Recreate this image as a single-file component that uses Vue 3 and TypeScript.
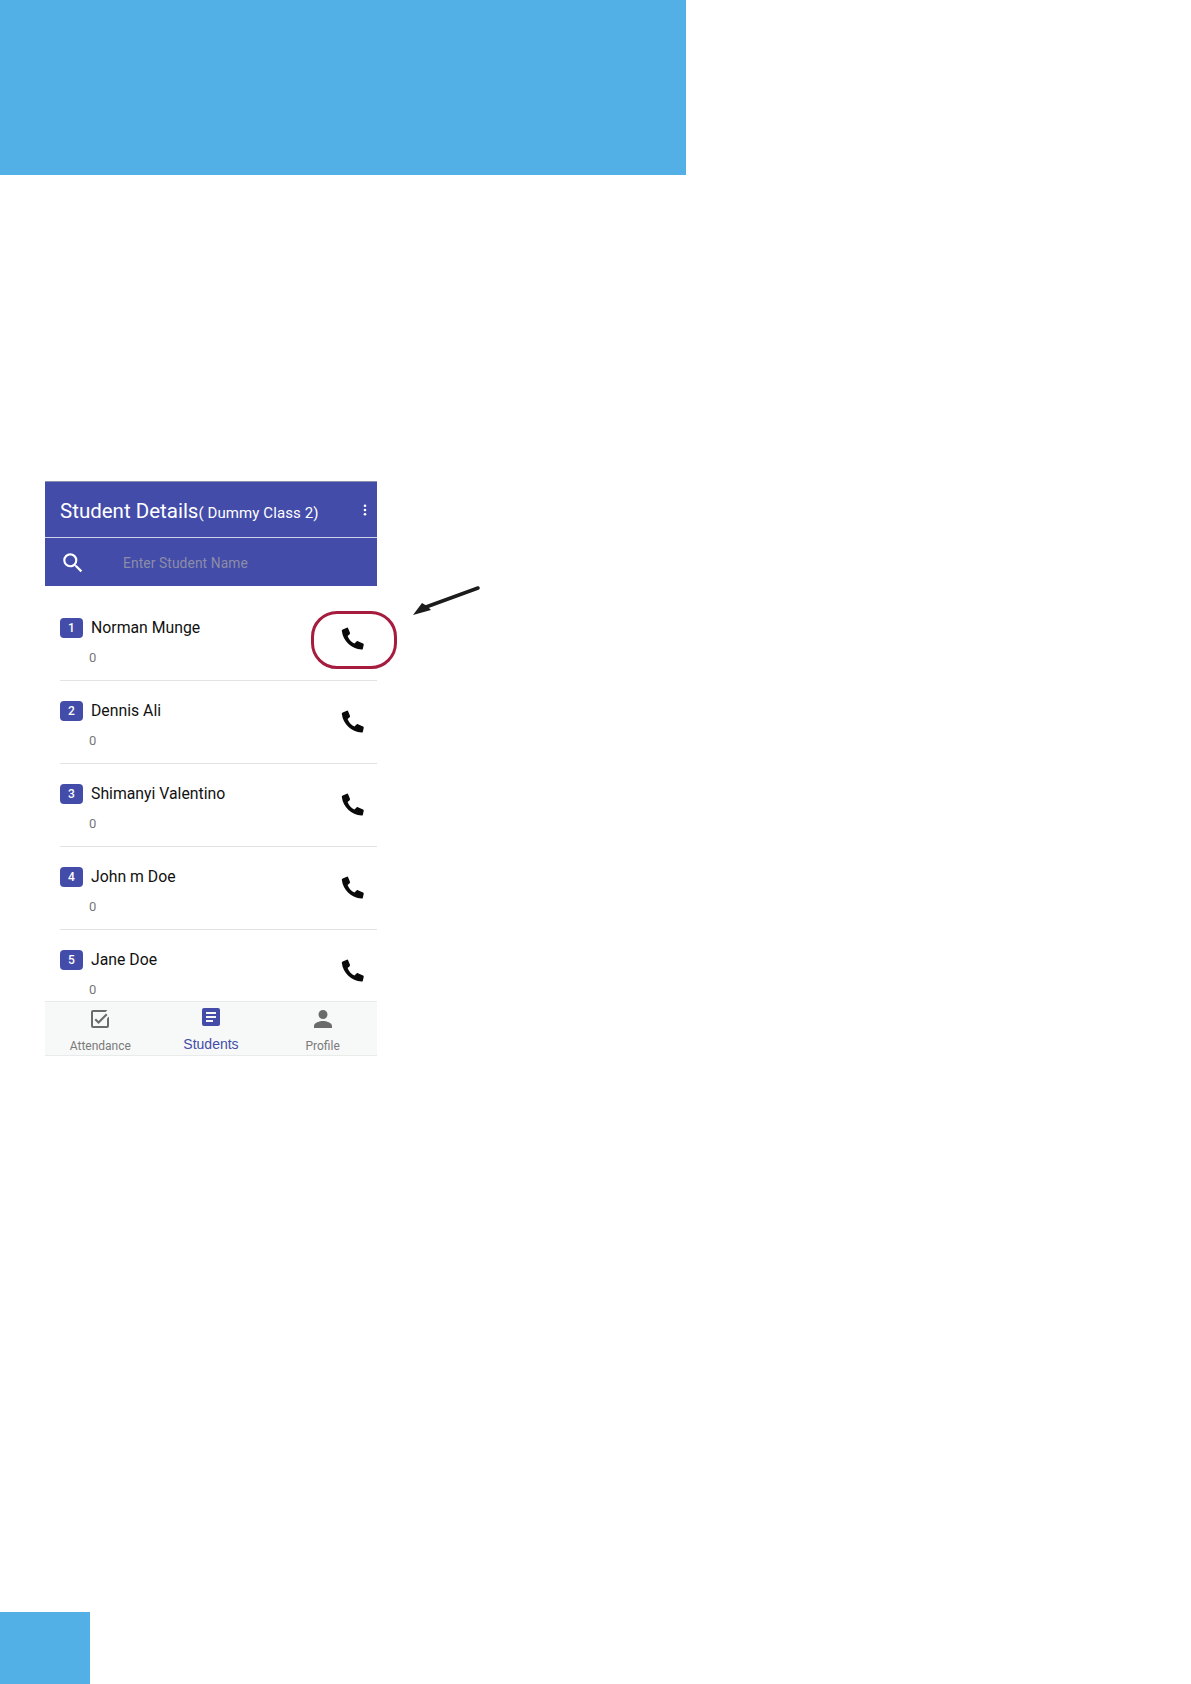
<script setup lang="ts">
interface Student { id: number; name: string }
const students: Student[] = [
  { id: 1, name: 'Norman Munge' },
  { id: 2, name: 'Dennis Ali' },
  { id: 3, name: 'Shimanyi Valentino' },
  { id: 4, name: 'John m Doe' },
  { id: 5, name: 'Jane Doe' },
]
const phonePath = 'M2.600 2.400 6.300.600c.5-.2 1 0 1.200.5l1.700 4.300c.2.400 0 .9-.3 1.200L7 8.300c1 2.900 3.400 5.600 6.300 7l2-2c.3-.3.8-.4 1.200-.2l4.800 2.100c.5.200.7.700.6 1.100l-.8 3.700c-.2.600-.6.900-1.200.8C10.400 20.200 2.800 12.800 1.700 3.600c-.1-.5.300-1 .9-1.200z'
</script>

<template>
  <div class="page">
    <div class="band"></div>
    <main class="phone">
      <header class="title-bar">
        <h1 class="title">Student Details<span class="subtitle">( Dummy Class 2)</span></h1>
        <svg class="more" width="4" height="12" viewBox="0 0 4 12" aria-hidden="true">
          <circle cx="2" cy="1.800" r="1.300" />
          <circle cx="2" cy="6" r="1.300" />
          <circle cx="2" cy="10.200" r="1.300" />
        </svg>
      </header>
      <div class="search-bar">
        <svg class="search-icon" width="26" height="26" viewBox="0 0 24 24" aria-hidden="true">
          <path d="M15.500 14h-.790l-.280-.270A6.470 6.470 0 0 0 16 9.500 6.500 6.500 0 1 0 9.500 16c1.610 0 3.090-.590 4.230-1.570l.270.280v.790l5 4.990L20.490 19l-4.990-5zm-6 0C7.010 14 5 11.990 5 9.500S7.010 5 9.500 5 14 7.010 14 9.500 11.990 14 9.500 14z" />
        </svg>
        <span class="placeholder">Enter Student Name</span>
      </div>
      <ul class="list">
        <li v-for="s in students" :key="s.id" class="row">
          <div class="info">
            <div class="name-line">
              <span class="badge">{{ s.id }}</span>
              <span class="name">{{ s.name }}</span>
            </div>
            <div class="count">0</div>
          </div>
          <svg class="call" width="26" height="26" viewBox="0 0 24 24" aria-hidden="true">
            <path :d="phonePath" />
          </svg>
        </li>
      </ul>
      <nav class="tabs">
        <div class="tab">
          <svg width="24" height="24" viewBox="0 0 24 24" aria-hidden="true" class="tab-icon">
            <path d="M19 6v13H5V5h12.500l2-2H5a2 2 0 0 0-2 2v14a2 2 0 0 0 2 2h14a2 2 0 0 0 2-2v-9.500l-2 2z" />
            <path d="M10.500 17 6.500 13 8 11.500l2.500 2.500L18 6.500 19.500 8z" />
          </svg>
          <span class="tab-label">Attendance</span>
        </div>
        <div class="tab active">
          <svg width="24" height="24" viewBox="0 0 24 24" aria-hidden="true" class="tab-icon">
            <path d="M19 3H5a2 2 0 0 0-2 2v14a2 2 0 0 0 2 2h14a2 2 0 0 0 2-2V5a2 2 0 0 0-2-2zm-5 14H7v-2h7v2zm3-4H7v-2h10v2zm0-4H7V7h10v2z" />
          </svg>
          <span class="tab-label">Students</span>
        </div>
        <div class="tab profile">
          <svg width="24" height="24" viewBox="0 0 24 24" aria-hidden="true" class="tab-icon">
            <path d="M12 12a4.500 4.500 0 1 0 0-9 4.500 4.500 0 0 0 0 9zm0 2c-3.300 0-9 1.700-9 5v2h18v-2c0-3.300-5.700-5-9-5z" />
          </svg>
          <span class="tab-label">Profile</span>
        </div>
      </nav>
      <div class="ring"></div>
      <svg class="arrow" width="70" height="32" viewBox="0 0 70 32" aria-hidden="true">
        <path d="M67 2 15 21" fill="none" stroke="#1c1c1c" stroke-width="3.500" stroke-linecap="round" />
        <path d="M2 29 11 17l5 3 4 4z" fill="#1c1c1c" />
      </svg>
    </main>
    <div class="corner"></div>
  </div>
</template>

<style scoped>
.page {
  position: relative;
  height: 1684px;
  overflow: hidden;
  background: #fff;
  font-family: Roboto, "Liberation Sans", Arial, sans-serif;
}
.band {
  width: 686px;
  height: 175px;
  background: #52b0e7;
}
.phone {
  position: relative;
  width: 332px;
  margin: 306px 0 0 45px;
}
.title-bar {
  display: flex;
  align-items: center;
  justify-content: space-between;
  box-sizing: border-box;
  height: 57px;
  padding: 4px 10px 0 15px;
  background: #434ca9;
  border-top: 1px solid #8d90ab;
  border-bottom: 1px solid #cfd2ea;
  color: #fff;
}
.title {
  margin: 0;
  font-size: 20.500px;
  font-weight: 400;
  line-height: 24px;
}
.subtitle {
  font-size: 15px;
  letter-spacing: 0.1px;
}
.more {
  fill: #fff;
  margin-bottom: 4px;
}
.search-bar {
  display: flex;
  align-items: center;
  height: 48px;
  padding: 1px 0 0 15px;
  box-sizing: border-box;
  background: #434ca9;
}
.search-icon {
  fill: #fff;
}
.placeholder {
  margin-left: 37px;
  font-size: 13.800px;
  letter-spacing: 0.1px;
  color: #8c8ca8;
}
.list {
  height: 415px;
  margin: 0;
  padding: 12px 0 0 15px;
  overflow: hidden;
  list-style: none;
  box-sizing: border-box;
}
.row {
  display: flex;
  justify-content: space-between;
  box-sizing: border-box;
  height: 83px;
  border-bottom: 1px solid #e3e3e3;
}
.row:last-child {
  border-bottom: 0;
}
.info {
  padding-top: 20px;
}
.name-line {
  display: flex;
  align-items: center;
  height: 20px;
}
.badge {
  display: flex;
  align-items: center;
  justify-content: center;
  width: 23px;
  height: 20px;
  border-radius: 4px;
  background: #434ca9;
  color: #fff;
  font-size: 12px;
  font-weight: 500;
}
.name {
  margin: -1px 0 0 8px;
  font-size: 15.800px;
  color: #111;
}
.count {
  margin: 11px 0 0 29px;
  font-size: 13px;
  line-height: 18px;
  color: #777;
}
.call {
  margin: 29px 11px 0 0;
  fill: #0a0a0a;
}
.tabs {
  display: grid;
  grid-template-columns: repeat(3, 1fr);
  box-sizing: border-box;
  height: 55px;
  background: #f7f8f8;
  border-top: 1px solid #e9eaea;
  border-bottom: 1px solid #e9eaea;
}
.tab {
  display: flex;
  flex-direction: column;
  align-items: center;
  color: #7a7a7a;
  padding-top: 5px;
}
.profile {
  padding-left: 2px;
}
.tab-icon {
  fill: #6b6b6b;
}
.tab-label {
  margin-top: 7px;
  font-size: 12px;
  line-height: 16px;
}
.active {
  color: #434ca9;
  padding-top: 3px;
}
.active .tab-icon {
  fill: #434ca9;
}
.active .tab-label {
  margin-top: 7px;
  font-size: 14px;
  font-family: "Liberation Sans", Arial, sans-serif;
}
.ring {
  position: absolute;
  left: 266px;
  top: 130px;
  box-sizing: border-box;
  width: 86px;
  height: 58px;
  border: 3.500px solid #a51c3e;
  border-radius: 26px;
}
.arrow {
  position: absolute;
  left: 366px;
  top: 105px;
}
.corner {
  position: absolute;
  left: 0;
  bottom: 0;
  width: 90px;
  height: 72px;
  background: #52b0e7;
}
</style>
